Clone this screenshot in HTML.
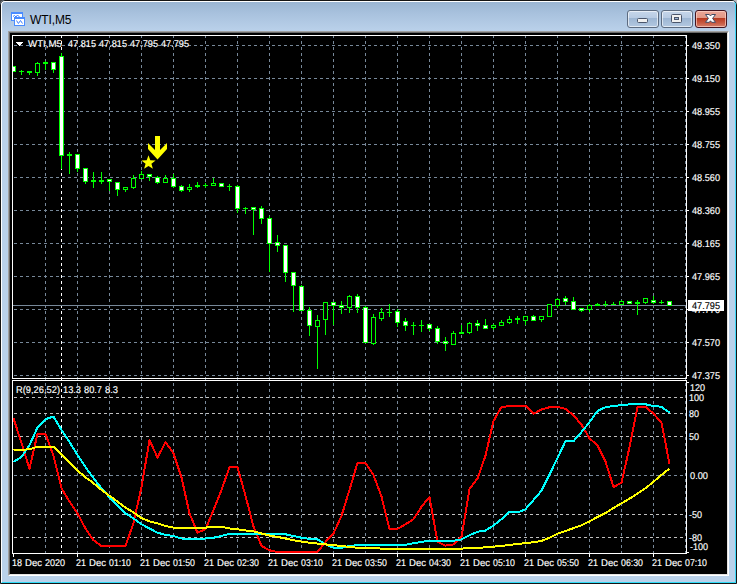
<!DOCTYPE html>
<html><head><meta charset="utf-8"><title>WTI,M5</title>
<style>
html,body{margin:0;padding:0;background:#fff;}
body{width:739px;height:584px;overflow:hidden;position:relative;font-family:"Liberation Sans",sans-serif;}
.win{position:absolute;left:0;top:0;width:737px;height:584px;border-radius:5px 5px 0 0;
 background:linear-gradient(to bottom,#98b3d1 0px,#a9c2de 14px,#bad1ea 31px,#b9d1ea 100%);overflow:hidden;}
.win .b0{position:absolute;left:0;top:0;right:0;bottom:0;border:1px solid #141414;border-radius:5px 5px 0 0;}
.win .b1{position:absolute;left:1px;top:1px;right:1px;bottom:1px;border:1px solid #fff;border-right-color:#3fd8f8;border-bottom-color:#2fdcf8;border-radius:4px 4px 0 0;}

.title{position:absolute;left:30px;top:12px;font-size:12px;line-height:16px;color:#000;white-space:pre;letter-spacing:-0.1px;}
.client{position:absolute;left:8px;top:31px;width:717px;height:541px;background:#000;
 border-style:solid;border-width:2px;border-color:#a0a0a0 #fff #fff #a0a0a0;}
.client:before{content:"";position:absolute;left:-1px;top:-1px;right:-1px;bottom:-1px;border-style:solid;border-width:1px;border-color:#696969 #e3e3e3 #e3e3e3 #696969;}
.btn{position:absolute;top:10px;height:16px;border:1px solid #5c6b80;border-radius:3px;box-shadow:inset 0 0 0 1px rgba(255,255,255,.6);
 background:linear-gradient(to bottom,#c6d6ea 0%,#b8cbe3 42%,#9db6d3 46%,#b3c8e1 100%);}
.btn.min i{position:absolute;left:9px;top:7px;width:9px;height:3px;background:#f0f0f0;border:1px solid #4a556b;border-radius:1.5px;}
.btn.max i{position:absolute;left:9px;top:3px;width:9px;height:7px;background:#f0f0f0;border:1px solid #4a556b;border-radius:1.5px;}
.btn.max b{position:absolute;left:12px;top:6px;width:3px;height:1px;background:#9bb4d4;border:1px solid #4a556b;}
.btn.close{border-color:#431520;background:linear-gradient(to bottom,#eaa698 0%,#e29886 42%,#b83a21 46%,#c85a42 75%,#d4806e 100%);box-shadow:inset 0 0 0 1px rgba(255,215,205,.65);}
svg text{font-family:"Liberation Sans",sans-serif;font-size:9.8px;text-rendering:geometricPrecision;stroke-width:0.15px;}
</style></head><body>
<div style="position:absolute;left:0;top:0;width:5px;height:5px;background:#444"></div><div style="position:absolute;left:731px;top:0;width:6px;height:5px;background:#bbb"></div>
<div class="win"><div class="b0"></div><div class="b1"></div>
<svg class="ico" width="16" height="16" viewBox="10 11 16 16" style="position:absolute;left:10px;top:11px" shape-rendering="crispEdges">
<rect x="11" y="12" width="12" height="9" fill="#4a8cff"/><rect x="12" y="14" width="10" height="6" fill="#fff"/>
<polyline points="13,16.5 14.5,15.5 16,17 17.5,15 19.5,17" fill="none" stroke="#3f7fff" shape-rendering="auto"/>
<rect x="14" y="17" width="11" height="9" fill="#4a8cff"/><rect x="15" y="19" width="9" height="6" fill="#fff"/>
<polyline points="16.5,20.5 18.4,23.5 20.5,20.5 22.5,23.5" fill="none" stroke="#3f7fff" shape-rendering="auto"/>
</svg>
<div class="title">WTI,M5</div>
<div class="btn min" style="left:627px;width:30px"><i></i></div>
<div class="btn max" style="left:661px;width:30px"><i></i><b></b></div>
<div class="btn close" style="left:695px;width:30px"><svg width="13" height="11" viewBox="0 0 13 11" style="position:absolute;left:8px;top:2px"><path d="M1.5 1.5 L5.3 1.5 L6.5 3 L7.7 1.5 L11.5 1.5 L8.6 5.4 L11.5 9.3 L7.7 9.3 L6.5 7.8 L5.3 9.3 L1.5 9.3 L4.4 5.4 Z" fill="#fff" stroke="#414a63" stroke-width="1" stroke-linejoin="round"/></svg></div>
<div class="client"></div>
</div>
<svg width="739" height="584" viewBox="0 0 739 584" style="position:absolute;left:0;top:0">
<g shape-rendering="crispEdges">
<line x1="45.5" y1="36" x2="45.5" y2="553" stroke="#778899" stroke-dasharray="3 3" stroke-dashoffset="1"/>
<line x1="77.5" y1="36" x2="77.5" y2="553" stroke="#778899" stroke-dasharray="3 3" stroke-dashoffset="1"/>
<line x1="109.5" y1="36" x2="109.5" y2="553" stroke="#778899" stroke-dasharray="3 3" stroke-dashoffset="1"/>
<line x1="141.5" y1="36" x2="141.5" y2="553" stroke="#778899" stroke-dasharray="3 3" stroke-dashoffset="1"/>
<line x1="173.5" y1="36" x2="173.5" y2="553" stroke="#778899" stroke-dasharray="3 3" stroke-dashoffset="1"/>
<line x1="205.5" y1="36" x2="205.5" y2="553" stroke="#778899" stroke-dasharray="3 3" stroke-dashoffset="1"/>
<line x1="237.5" y1="36" x2="237.5" y2="553" stroke="#778899" stroke-dasharray="3 3" stroke-dashoffset="1"/>
<line x1="269.5" y1="36" x2="269.5" y2="553" stroke="#778899" stroke-dasharray="3 3" stroke-dashoffset="1"/>
<line x1="301.5" y1="36" x2="301.5" y2="553" stroke="#778899" stroke-dasharray="3 3" stroke-dashoffset="1"/>
<line x1="333.5" y1="36" x2="333.5" y2="553" stroke="#778899" stroke-dasharray="3 3" stroke-dashoffset="1"/>
<line x1="365.5" y1="36" x2="365.5" y2="553" stroke="#778899" stroke-dasharray="3 3" stroke-dashoffset="1"/>
<line x1="397.5" y1="36" x2="397.5" y2="553" stroke="#778899" stroke-dasharray="3 3" stroke-dashoffset="1"/>
<line x1="429.5" y1="36" x2="429.5" y2="553" stroke="#778899" stroke-dasharray="3 3" stroke-dashoffset="1"/>
<line x1="461.5" y1="36" x2="461.5" y2="553" stroke="#778899" stroke-dasharray="3 3" stroke-dashoffset="1"/>
<line x1="493.5" y1="36" x2="493.5" y2="553" stroke="#778899" stroke-dasharray="3 3" stroke-dashoffset="1"/>
<line x1="525.5" y1="36" x2="525.5" y2="553" stroke="#778899" stroke-dasharray="3 3" stroke-dashoffset="1"/>
<line x1="557.5" y1="36" x2="557.5" y2="553" stroke="#778899" stroke-dasharray="3 3" stroke-dashoffset="1"/>
<line x1="589.5" y1="36" x2="589.5" y2="553" stroke="#778899" stroke-dasharray="3 3" stroke-dashoffset="1"/>
<line x1="621.5" y1="36" x2="621.5" y2="553" stroke="#778899" stroke-dasharray="3 3" stroke-dashoffset="1"/>
<line x1="653.5" y1="36" x2="653.5" y2="553" stroke="#778899" stroke-dasharray="3 3" stroke-dashoffset="1"/>
<line x1="685.5" y1="36" x2="685.5" y2="553" stroke="#778899" stroke-dasharray="3 3" stroke-dashoffset="1"/>
<line x1="14" y1="45.5" x2="686" y2="45.5" stroke="#778899" stroke-dasharray="3 3"/>
<rect x="687" y="45" width="2" height="1" fill="#fff"/>
<line x1="14" y1="78.5" x2="686" y2="78.5" stroke="#778899" stroke-dasharray="3 3"/>
<rect x="687" y="78" width="2" height="1" fill="#fff"/>
<line x1="14" y1="111.5" x2="686" y2="111.5" stroke="#778899" stroke-dasharray="3 3"/>
<rect x="687" y="111" width="2" height="1" fill="#fff"/>
<line x1="14" y1="144.5" x2="686" y2="144.5" stroke="#778899" stroke-dasharray="3 3"/>
<rect x="687" y="144" width="2" height="1" fill="#fff"/>
<line x1="14" y1="177.5" x2="686" y2="177.5" stroke="#778899" stroke-dasharray="3 3"/>
<rect x="687" y="177" width="2" height="1" fill="#fff"/>
<line x1="14" y1="210.5" x2="686" y2="210.5" stroke="#778899" stroke-dasharray="3 3"/>
<rect x="687" y="210" width="2" height="1" fill="#fff"/>
<line x1="14" y1="243.5" x2="686" y2="243.5" stroke="#778899" stroke-dasharray="3 3"/>
<rect x="687" y="243" width="2" height="1" fill="#fff"/>
<line x1="14" y1="276.5" x2="686" y2="276.5" stroke="#778899" stroke-dasharray="3 3"/>
<rect x="687" y="276" width="2" height="1" fill="#fff"/>
<line x1="14" y1="309.5" x2="686" y2="309.5" stroke="#778899" stroke-dasharray="3 3"/>
<rect x="687" y="309" width="2" height="1" fill="#fff"/>
<line x1="14" y1="342.5" x2="686" y2="342.5" stroke="#778899" stroke-dasharray="3 3"/>
<rect x="687" y="342" width="2" height="1" fill="#fff"/>
<line x1="14" y1="375.5" x2="686" y2="375.5" stroke="#778899" stroke-dasharray="3 3"/>
<rect x="687" y="375" width="2" height="1" fill="#fff"/>
<line x1="61.5" y1="36" x2="61.5" y2="553" stroke="#fff" stroke-dasharray="3 3" stroke-dashoffset="1"/>
<line x1="14" y1="397.5" x2="686" y2="397.5" stroke="#C0C0C0" stroke-dasharray="3 3"/>
<line x1="14" y1="413.5" x2="686" y2="413.5" stroke="#C0C0C0" stroke-dasharray="3 3"/>
<line x1="14" y1="436.5" x2="686" y2="436.5" stroke="#C0C0C0" stroke-dasharray="3 3"/>
<line x1="14" y1="475.5" x2="686" y2="475.5" stroke="#778899" stroke-dasharray="3 3"/>
<line x1="14" y1="514.5" x2="686" y2="514.5" stroke="#C0C0C0" stroke-dasharray="3 3"/>
<line x1="14" y1="537.5" x2="686" y2="537.5" stroke="#C0C0C0" stroke-dasharray="3 3"/>
<rect x="687" y="382" width="2" height="1" fill="#fff"/>
<rect x="687" y="552" width="2" height="1" fill="#fff"/>
<rect x="12.5" y="35.5" width="674" height="343" fill="none" stroke="#fff"/>
<rect x="12.5" y="380.5" width="674" height="173" fill="none" stroke="#fff"/>
<rect x="13" y="554" width="1" height="3" fill="#fff"/>
<rect x="77" y="554" width="1" height="3" fill="#fff"/>
<rect x="141" y="554" width="1" height="3" fill="#fff"/>
<rect x="205" y="554" width="1" height="3" fill="#fff"/>
<rect x="269" y="554" width="1" height="3" fill="#fff"/>
<rect x="333" y="554" width="1" height="3" fill="#fff"/>
<rect x="397" y="554" width="1" height="3" fill="#fff"/>
<rect x="461" y="554" width="1" height="3" fill="#fff"/>
<rect x="525" y="554" width="1" height="3" fill="#fff"/>
<rect x="589" y="554" width="1" height="3" fill="#fff"/>
<rect x="653" y="554" width="1" height="3" fill="#fff"/>
<rect x="13" y="305" width="673" height="1" fill="#778899"/>
<rect x="13" y="66" width="1" height="6" fill="#00FF00"/>
<rect x="13" y="66" width="3" height="6" fill="#00FF00"/>
<rect x="13" y="67" width="2" height="4" fill="#fff"/>
<rect x="21" y="70" width="1" height="5" fill="#00FF00"/>
<rect x="19" y="71" width="5" height="1" fill="#00FF00"/>
<rect x="29" y="71" width="1" height="4" fill="#00FF00"/>
<rect x="27" y="71" width="5" height="2" fill="#00FF00"/>
<rect x="37" y="62" width="1" height="14" fill="#00FF00"/>
<rect x="35" y="63" width="5" height="10" fill="#00FF00"/>
<rect x="36" y="64" width="3" height="8" fill="#000"/>
<rect x="45" y="61" width="1" height="9" fill="#00FF00"/>
<rect x="43" y="62" width="5" height="2" fill="#00FF00"/>
<rect x="53" y="62" width="1" height="11" fill="#00FF00"/>
<rect x="51" y="62" width="5" height="8" fill="#00FF00"/>
<rect x="52" y="63" width="3" height="6" fill="#fff"/>
<rect x="61" y="53" width="1" height="116" fill="#00FF00"/>
<rect x="59" y="56" width="5" height="100" fill="#00FF00"/>
<rect x="60" y="57" width="3" height="98" fill="#fff"/>
<rect x="69" y="152" width="1" height="22" fill="#00FF00"/>
<rect x="67" y="154" width="5" height="2" fill="#00FF00"/>
<rect x="77" y="154" width="1" height="18" fill="#00FF00"/>
<rect x="75" y="154" width="5" height="15" fill="#00FF00"/>
<rect x="76" y="155" width="3" height="13" fill="#fff"/>
<rect x="85" y="168" width="1" height="16" fill="#00FF00"/>
<rect x="83" y="168" width="5" height="14" fill="#00FF00"/>
<rect x="84" y="169" width="3" height="12" fill="#fff"/>
<rect x="93" y="172" width="1" height="16" fill="#00FF00"/>
<rect x="91" y="180" width="5" height="2" fill="#00FF00"/>
<rect x="101" y="172" width="1" height="12" fill="#00FF00"/>
<rect x="99" y="180" width="5" height="2" fill="#00FF00"/>
<rect x="109" y="179" width="1" height="12" fill="#00FF00"/>
<rect x="107" y="179" width="5" height="3" fill="#00FF00"/>
<rect x="108" y="180" width="3" height="1" fill="#fff"/>
<rect x="117" y="182" width="1" height="14" fill="#00FF00"/>
<rect x="115" y="182" width="5" height="8" fill="#00FF00"/>
<rect x="116" y="183" width="3" height="6" fill="#fff"/>
<rect x="125" y="187" width="1" height="5" fill="#00FF00"/>
<rect x="123" y="187" width="5" height="3" fill="#00FF00"/>
<rect x="124" y="188" width="3" height="1" fill="#000"/>
<rect x="133" y="175" width="1" height="14" fill="#00FF00"/>
<rect x="131" y="178" width="5" height="10" fill="#00FF00"/>
<rect x="132" y="179" width="3" height="8" fill="#000"/>
<rect x="141" y="171" width="1" height="8" fill="#00FF00"/>
<rect x="139" y="174" width="5" height="5" fill="#00FF00"/>
<rect x="140" y="175" width="3" height="3" fill="#000"/>
<rect x="149" y="174" width="1" height="7" fill="#00FF00"/>
<rect x="147" y="174" width="5" height="3" fill="#00FF00"/>
<rect x="148" y="175" width="3" height="1" fill="#fff"/>
<rect x="157" y="176" width="1" height="8" fill="#00FF00"/>
<rect x="155" y="177" width="5" height="6" fill="#00FF00"/>
<rect x="156" y="178" width="3" height="4" fill="#fff"/>
<rect x="165" y="175" width="1" height="8" fill="#00FF00"/>
<rect x="163" y="178" width="5" height="5" fill="#00FF00"/>
<rect x="164" y="179" width="3" height="3" fill="#000"/>
<rect x="173" y="174" width="1" height="14" fill="#00FF00"/>
<rect x="171" y="178" width="5" height="9" fill="#00FF00"/>
<rect x="172" y="179" width="3" height="7" fill="#fff"/>
<rect x="181" y="185" width="1" height="7" fill="#00FF00"/>
<rect x="179" y="186" width="5" height="5" fill="#00FF00"/>
<rect x="180" y="187" width="3" height="3" fill="#fff"/>
<rect x="189" y="184" width="1" height="8" fill="#00FF00"/>
<rect x="187" y="187" width="5" height="3" fill="#00FF00"/>
<rect x="188" y="188" width="3" height="1" fill="#000"/>
<rect x="197" y="182" width="1" height="6" fill="#00FF00"/>
<rect x="195" y="185" width="5" height="2" fill="#00FF00"/>
<rect x="205" y="183" width="1" height="5" fill="#00FF00"/>
<rect x="203" y="185" width="5" height="1" fill="#00FF00"/>
<rect x="213" y="178" width="1" height="8" fill="#00FF00"/>
<rect x="211" y="183" width="5" height="3" fill="#00FF00"/>
<rect x="212" y="184" width="3" height="1" fill="#000"/>
<rect x="221" y="183" width="1" height="4" fill="#00FF00"/>
<rect x="219" y="183" width="5" height="4" fill="#00FF00"/>
<rect x="220" y="184" width="3" height="2" fill="#fff"/>
<rect x="229" y="184" width="1" height="7" fill="#00FF00"/>
<rect x="227" y="186" width="5" height="1" fill="#00FF00"/>
<rect x="237" y="185" width="1" height="28" fill="#00FF00"/>
<rect x="235" y="186" width="5" height="23" fill="#00FF00"/>
<rect x="236" y="187" width="3" height="21" fill="#fff"/>
<rect x="245" y="207" width="1" height="7" fill="#00FF00"/>
<rect x="243" y="208" width="5" height="1" fill="#00FF00"/>
<rect x="253" y="207" width="1" height="28" fill="#00FF00"/>
<rect x="251" y="207" width="5" height="3" fill="#00FF00"/>
<rect x="252" y="208" width="3" height="1" fill="#fff"/>
<rect x="261" y="206" width="1" height="18" fill="#00FF00"/>
<rect x="259" y="208" width="5" height="11" fill="#00FF00"/>
<rect x="260" y="209" width="3" height="9" fill="#fff"/>
<rect x="269" y="216" width="1" height="56" fill="#00FF00"/>
<rect x="267" y="218" width="5" height="26" fill="#00FF00"/>
<rect x="268" y="219" width="3" height="24" fill="#fff"/>
<rect x="277" y="235" width="1" height="17" fill="#00FF00"/>
<rect x="275" y="242" width="5" height="4" fill="#00FF00"/>
<rect x="276" y="243" width="3" height="2" fill="#fff"/>
<rect x="285" y="245" width="1" height="37" fill="#00FF00"/>
<rect x="283" y="245" width="5" height="28" fill="#00FF00"/>
<rect x="284" y="246" width="3" height="26" fill="#fff"/>
<rect x="293" y="272" width="1" height="40" fill="#00FF00"/>
<rect x="291" y="272" width="5" height="14" fill="#00FF00"/>
<rect x="292" y="273" width="3" height="12" fill="#fff"/>
<rect x="301" y="285" width="1" height="26" fill="#00FF00"/>
<rect x="299" y="286" width="5" height="25" fill="#00FF00"/>
<rect x="300" y="287" width="3" height="23" fill="#fff"/>
<rect x="309" y="307" width="1" height="29" fill="#00FF00"/>
<rect x="307" y="310" width="5" height="16" fill="#00FF00"/>
<rect x="308" y="311" width="3" height="14" fill="#fff"/>
<rect x="317" y="315" width="1" height="54" fill="#00FF00"/>
<rect x="315" y="320" width="5" height="7" fill="#00FF00"/>
<rect x="316" y="321" width="3" height="5" fill="#000"/>
<rect x="325" y="302" width="1" height="33" fill="#00FF00"/>
<rect x="323" y="302" width="5" height="18" fill="#00FF00"/>
<rect x="324" y="303" width="3" height="16" fill="#000"/>
<rect x="333" y="302" width="1" height="23" fill="#00FF00"/>
<rect x="331" y="302" width="5" height="4" fill="#00FF00"/>
<rect x="332" y="303" width="3" height="2" fill="#fff"/>
<rect x="341" y="301" width="1" height="13" fill="#00FF00"/>
<rect x="339" y="305" width="5" height="3" fill="#00FF00"/>
<rect x="340" y="306" width="3" height="1" fill="#fff"/>
<rect x="349" y="295" width="1" height="18" fill="#00FF00"/>
<rect x="347" y="296" width="5" height="12" fill="#00FF00"/>
<rect x="348" y="297" width="3" height="10" fill="#000"/>
<rect x="357" y="294" width="1" height="19" fill="#00FF00"/>
<rect x="355" y="296" width="5" height="12" fill="#00FF00"/>
<rect x="356" y="297" width="3" height="10" fill="#fff"/>
<rect x="365" y="306" width="1" height="37" fill="#00FF00"/>
<rect x="363" y="307" width="5" height="36" fill="#00FF00"/>
<rect x="364" y="308" width="3" height="34" fill="#fff"/>
<rect x="373" y="314" width="1" height="31" fill="#00FF00"/>
<rect x="371" y="317" width="5" height="27" fill="#00FF00"/>
<rect x="372" y="318" width="3" height="25" fill="#000"/>
<rect x="381" y="308" width="1" height="13" fill="#00FF00"/>
<rect x="379" y="312" width="5" height="7" fill="#00FF00"/>
<rect x="380" y="313" width="3" height="5" fill="#000"/>
<rect x="389" y="304" width="1" height="13" fill="#00FF00"/>
<rect x="387" y="312" width="5" height="1" fill="#00FF00"/>
<rect x="397" y="309" width="1" height="18" fill="#00FF00"/>
<rect x="395" y="311" width="5" height="12" fill="#00FF00"/>
<rect x="396" y="312" width="3" height="10" fill="#fff"/>
<rect x="405" y="318" width="1" height="13" fill="#00FF00"/>
<rect x="403" y="321" width="5" height="5" fill="#00FF00"/>
<rect x="404" y="322" width="3" height="3" fill="#fff"/>
<rect x="413" y="322" width="1" height="13" fill="#00FF00"/>
<rect x="411" y="325" width="5" height="1" fill="#00FF00"/>
<rect x="421" y="320" width="1" height="12" fill="#00FF00"/>
<rect x="419" y="325" width="5" height="1" fill="#00FF00"/>
<rect x="429" y="324" width="1" height="7" fill="#00FF00"/>
<rect x="427" y="324" width="5" height="5" fill="#00FF00"/>
<rect x="428" y="325" width="3" height="3" fill="#fff"/>
<rect x="437" y="326" width="1" height="18" fill="#00FF00"/>
<rect x="435" y="328" width="5" height="14" fill="#00FF00"/>
<rect x="436" y="329" width="3" height="12" fill="#fff"/>
<rect x="445" y="337" width="1" height="14" fill="#00FF00"/>
<rect x="443" y="341" width="5" height="3" fill="#00FF00"/>
<rect x="444" y="342" width="3" height="1" fill="#fff"/>
<rect x="453" y="331" width="1" height="14" fill="#00FF00"/>
<rect x="451" y="333" width="5" height="12" fill="#00FF00"/>
<rect x="452" y="334" width="3" height="10" fill="#000"/>
<rect x="461" y="325" width="1" height="9" fill="#00FF00"/>
<rect x="459" y="332" width="5" height="2" fill="#00FF00"/>
<rect x="469" y="322" width="1" height="12" fill="#00FF00"/>
<rect x="467" y="323" width="5" height="10" fill="#00FF00"/>
<rect x="468" y="324" width="3" height="8" fill="#000"/>
<rect x="477" y="320" width="1" height="11" fill="#00FF00"/>
<rect x="475" y="323" width="5" height="3" fill="#00FF00"/>
<rect x="476" y="324" width="3" height="1" fill="#fff"/>
<rect x="485" y="319" width="1" height="10" fill="#00FF00"/>
<rect x="483" y="325" width="5" height="4" fill="#00FF00"/>
<rect x="484" y="326" width="3" height="2" fill="#fff"/>
<rect x="493" y="324" width="1" height="6" fill="#00FF00"/>
<rect x="491" y="325" width="5" height="3" fill="#00FF00"/>
<rect x="492" y="326" width="3" height="1" fill="#000"/>
<rect x="501" y="320" width="1" height="6" fill="#00FF00"/>
<rect x="499" y="322" width="5" height="4" fill="#00FF00"/>
<rect x="500" y="323" width="3" height="2" fill="#000"/>
<rect x="509" y="316" width="1" height="8" fill="#00FF00"/>
<rect x="507" y="319" width="5" height="4" fill="#00FF00"/>
<rect x="508" y="320" width="3" height="2" fill="#000"/>
<rect x="517" y="316" width="1" height="8" fill="#00FF00"/>
<rect x="515" y="318" width="5" height="2" fill="#00FF00"/>
<rect x="525" y="316" width="1" height="9" fill="#00FF00"/>
<rect x="523" y="316" width="5" height="5" fill="#00FF00"/>
<rect x="524" y="317" width="3" height="3" fill="#000"/>
<rect x="533" y="315" width="1" height="6" fill="#00FF00"/>
<rect x="531" y="316" width="5" height="5" fill="#00FF00"/>
<rect x="532" y="317" width="3" height="3" fill="#fff"/>
<rect x="541" y="316" width="1" height="6" fill="#00FF00"/>
<rect x="539" y="316" width="5" height="4" fill="#00FF00"/>
<rect x="540" y="317" width="3" height="2" fill="#000"/>
<rect x="549" y="304" width="1" height="13" fill="#00FF00"/>
<rect x="547" y="304" width="5" height="13" fill="#00FF00"/>
<rect x="548" y="305" width="3" height="11" fill="#000"/>
<rect x="557" y="298" width="1" height="10" fill="#00FF00"/>
<rect x="555" y="299" width="5" height="7" fill="#00FF00"/>
<rect x="556" y="300" width="3" height="5" fill="#000"/>
<rect x="565" y="296" width="1" height="9" fill="#00FF00"/>
<rect x="563" y="298" width="5" height="4" fill="#00FF00"/>
<rect x="564" y="299" width="3" height="2" fill="#fff"/>
<rect x="573" y="297" width="1" height="13" fill="#00FF00"/>
<rect x="571" y="301" width="5" height="9" fill="#00FF00"/>
<rect x="572" y="302" width="3" height="7" fill="#fff"/>
<rect x="581" y="308" width="1" height="4" fill="#00FF00"/>
<rect x="579" y="308" width="5" height="3" fill="#00FF00"/>
<rect x="580" y="309" width="3" height="1" fill="#fff"/>
<rect x="589" y="304" width="1" height="8" fill="#00FF00"/>
<rect x="587" y="305" width="5" height="5" fill="#00FF00"/>
<rect x="588" y="306" width="3" height="3" fill="#000"/>
<rect x="597" y="303" width="1" height="3" fill="#00FF00"/>
<rect x="595" y="304" width="5" height="2" fill="#00FF00"/>
<rect x="605" y="301" width="1" height="6" fill="#00FF00"/>
<rect x="603" y="304" width="5" height="1" fill="#00FF00"/>
<rect x="613" y="302" width="1" height="3" fill="#00FF00"/>
<rect x="611" y="304" width="5" height="1" fill="#00FF00"/>
<rect x="621" y="300" width="1" height="5" fill="#00FF00"/>
<rect x="619" y="301" width="5" height="4" fill="#00FF00"/>
<rect x="620" y="302" width="3" height="2" fill="#000"/>
<rect x="629" y="301" width="1" height="3" fill="#00FF00"/>
<rect x="627" y="301" width="5" height="3" fill="#00FF00"/>
<rect x="628" y="302" width="3" height="1" fill="#fff"/>
<rect x="637" y="300" width="1" height="15" fill="#00FF00"/>
<rect x="635" y="302" width="5" height="2" fill="#00FF00"/>
<rect x="645" y="298" width="1" height="6" fill="#00FF00"/>
<rect x="643" y="298" width="5" height="5" fill="#00FF00"/>
<rect x="644" y="299" width="3" height="3" fill="#000"/>
<rect x="653" y="296" width="1" height="8" fill="#00FF00"/>
<rect x="651" y="300" width="5" height="3" fill="#00FF00"/>
<rect x="652" y="301" width="3" height="1" fill="#fff"/>
<rect x="661" y="300" width="1" height="4" fill="#00FF00"/>
<rect x="659" y="302" width="5" height="1" fill="#00FF00"/>
<rect x="669" y="301" width="1" height="5" fill="#00FF00"/>
<rect x="667" y="301" width="5" height="5" fill="#00FF00"/>
<rect x="668" y="302" width="3" height="3" fill="#fff"/>
</g>
<polyline points="13.5,418.3 21.5,443.0 29.5,468.8 37.5,433.7 45.5,433.7 53.5,456.0 61.5,488.2 69.5,501.6 77.5,513.4 85.5,528.5 93.5,540.2 101.5,546.0 109.5,546.0 117.5,546.0 125.5,546.0 133.5,523.0 141.5,487.0 149.5,440.0 157.5,457.6 165.5,442.0 173.5,453.4 181.5,477.5 189.5,513.4 197.5,532.7 205.5,529.3 213.5,510.0 221.5,489.9 229.5,467.2 237.5,467.2 245.5,495.8 253.5,526.5 261.5,546.0 269.5,550.3 277.5,552.0 285.5,552.0 293.5,552.0 301.5,552.0 309.5,552.0 317.5,552.0 325.5,541.9 333.5,533.5 341.5,515.9 349.5,489.9 357.5,463.0 365.5,463.0 373.5,475.2 381.5,496.6 389.5,528.8 397.5,528.8 405.5,524.3 413.5,519.2 421.5,506.7 429.5,496.9 437.5,541.9 445.5,545.6 453.5,544.4 461.5,536.9 469.5,489.0 477.5,478.5 485.5,455.5 493.5,421.1 501.5,406.8 509.5,406.3 517.5,405.7 525.5,405.7 533.5,413.9 541.5,409.4 549.5,407.2 557.5,406.8 565.5,408.9 573.5,415.2 581.5,424.7 589.5,438.3 597.5,445.4 605.5,461.5 613.5,487.0 621.5,482.8 629.5,447.1 637.5,406.8 645.5,406.8 653.5,413.6 661.5,422.8 669.5,463.9" fill="none" stroke="#FF0000" stroke-width="2" stroke-linejoin="round" stroke-linecap="butt" shape-rendering="crispEdges"/>
<polyline points="13.5,461.9 21.5,456.9 29.5,445.1 37.5,427.5 45.5,419.1 53.5,416.6 61.5,430.0 69.5,442.0 77.5,455.0 85.5,467.2 93.5,478.1 101.5,488.2 109.5,497.4 117.5,505.8 125.5,513.4 133.5,518.4 141.5,524.3 149.5,528.5 157.5,532.7 165.5,534.8 173.5,536.0 181.5,538.5 189.5,538.9 197.5,538.9 205.5,538.5 213.5,537.7 221.5,536.0 229.5,533.8 237.5,533.8 245.5,533.8 253.5,533.6 261.5,533.8 269.5,534.3 277.5,534.3 285.5,534.3 293.5,536.0 301.5,537.7 309.5,538.9 317.5,539.4 325.5,544.4 333.5,547.8 341.5,547.8 349.5,546.0 357.5,545.2 365.5,544.9 373.5,544.9 381.5,544.9 389.5,544.9 397.5,544.9 405.5,544.9 413.5,543.2 421.5,541.9 429.5,540.7 437.5,540.7 445.5,540.7 453.5,540.7 461.5,539.4 469.5,535.2 477.5,531.8 485.5,530.5 493.5,525.5 501.5,519.2 509.5,511.7 517.5,512.5 525.5,509.2 533.5,500.0 541.5,490.7 549.5,474.5 557.5,458.0 565.5,441.2 573.5,441.2 581.5,432.0 589.5,422.2 597.5,411.0 605.5,407.2 613.5,406.0 621.5,405.2 629.5,404.3 637.5,404.0 645.5,404.3 653.5,406.0 661.5,406.8 669.5,412.7" fill="none" stroke="#00FFFF" stroke-width="2" stroke-linejoin="round" stroke-linecap="butt" shape-rendering="crispEdges"/>
<polyline points="13.5,450.1 21.5,449.8 29.5,449.3 37.5,446.8 45.5,446.8 53.5,446.8 61.5,454.3 69.5,462.5 77.5,470.6 85.5,477.3 93.5,483.2 101.5,489.9 109.5,495.8 117.5,501.6 125.5,507.5 133.5,512.5 141.5,518.1 149.5,521.4 157.5,523.4 165.5,526.0 173.5,527.6 181.5,527.6 189.5,527.6 197.5,527.6 205.5,527.6 213.5,526.8 221.5,526.8 229.5,528.5 237.5,529.3 245.5,530.5 253.5,531.3 261.5,533.5 269.5,535.5 277.5,536.9 285.5,538.5 293.5,540.2 301.5,541.6 309.5,542.7 317.5,543.6 325.5,544.4 333.5,545.2 341.5,546.0 349.5,546.9 357.5,547.8 365.5,548.1 373.5,548.0 381.5,548.6 389.5,548.6 397.5,548.6 405.5,548.6 413.5,548.6 421.5,548.6 429.5,548.6 437.5,548.6 445.5,548.6 453.5,548.6 461.5,548.6 469.5,548.1 477.5,547.8 485.5,547.4 493.5,546.6 501.5,546.1 509.5,544.9 517.5,543.9 525.5,543.2 533.5,542.2 541.5,541.0 549.5,537.7 557.5,533.8 565.5,531.0 573.5,528.1 581.5,525.3 589.5,521.4 597.5,517.0 605.5,513.0 613.5,508.0 621.5,503.3 629.5,498.6 637.5,493.6 645.5,488.2 653.5,481.8 661.5,474.8 669.5,468.7" fill="none" stroke="#FFFF00" stroke-width="2" stroke-linejoin="round" stroke-linecap="butt" shape-rendering="crispEdges"/>
<polygon points="155,136 160,136 160,150 167,143 167,149 157.5,159.5 148,149 148,143 155,150" fill="#FFFF00"/>
<polygon points="148.50,155.30 150.31,160.31 155.63,160.48 151.42,163.75 152.91,168.87 148.50,165.88 144.09,168.87 145.58,163.75 141.37,160.48 146.69,160.31" fill="#FFFF00"/>
<g shape-rendering="crispEdges"><rect x="16" y="42" width="7" height="1" fill="#fff"/><rect x="17" y="43" width="5" height="1" fill="#fff"/><rect x="18" y="44" width="3" height="1" fill="#fff"/><rect x="19" y="45" width="1" height="1" fill="#fff"/></g>
<text x="692" y="49" fill="#fff" stroke="#fff" textLength="28" lengthAdjust="spacingAndGlyphs">49.350</text>
<text x="692" y="82" fill="#fff" stroke="#fff" textLength="28" lengthAdjust="spacingAndGlyphs">49.150</text>
<text x="692" y="115" fill="#fff" stroke="#fff" textLength="28" lengthAdjust="spacingAndGlyphs">48.955</text>
<text x="692" y="148" fill="#fff" stroke="#fff" textLength="28" lengthAdjust="spacingAndGlyphs">48.755</text>
<text x="692" y="181" fill="#fff" stroke="#fff" textLength="28" lengthAdjust="spacingAndGlyphs">48.560</text>
<text x="692" y="214" fill="#fff" stroke="#fff" textLength="28" lengthAdjust="spacingAndGlyphs">48.360</text>
<text x="692" y="247" fill="#fff" stroke="#fff" textLength="28" lengthAdjust="spacingAndGlyphs">48.165</text>
<text x="692" y="280" fill="#fff" stroke="#fff" textLength="28" lengthAdjust="spacingAndGlyphs">47.965</text>
<text x="692" y="313" fill="#fff" stroke="#fff" textLength="28" lengthAdjust="spacingAndGlyphs">47.770</text>
<text x="692" y="346" fill="#fff" stroke="#fff" textLength="28" lengthAdjust="spacingAndGlyphs">47.570</text>
<text x="692" y="379" fill="#fff" stroke="#fff" textLength="28" lengthAdjust="spacingAndGlyphs">47.375</text>
<text x="690" y="391" fill="#fff" stroke="#fff" textLength="15" lengthAdjust="spacingAndGlyphs">120</text>
<text x="689" y="401" fill="#fff" stroke="#fff" textLength="15" lengthAdjust="spacingAndGlyphs">100</text>
<text x="689" y="417" fill="#fff" stroke="#fff" textLength="10" lengthAdjust="spacingAndGlyphs">80</text>
<text x="689" y="440" fill="#fff" stroke="#fff" textLength="10" lengthAdjust="spacingAndGlyphs">50</text>
<text x="690" y="479" fill="#fff" stroke="#fff" textLength="18" lengthAdjust="spacingAndGlyphs">0.00</text>
<text x="689" y="518" fill="#fff" stroke="#fff" textLength="13" lengthAdjust="spacingAndGlyphs">-50</text>
<text x="689" y="541" fill="#fff" stroke="#fff" textLength="13" lengthAdjust="spacingAndGlyphs">-80</text>
<text x="690" y="550" fill="#fff" stroke="#fff" textLength="18" lengthAdjust="spacingAndGlyphs">-100</text>
<text x="12" y="566" fill="#fff" stroke="#fff" textLength="10" lengthAdjust="spacingAndGlyphs">18</text>
<text x="25" y="566" fill="#fff" stroke="#fff" textLength="17" lengthAdjust="spacingAndGlyphs">Dec</text>
<text x="45" y="566" fill="#fff" stroke="#fff" textLength="20" lengthAdjust="spacingAndGlyphs">2020</text>
<text x="76" y="566" fill="#fff" stroke="#fff" textLength="10" lengthAdjust="spacingAndGlyphs">21</text>
<text x="89" y="566" fill="#fff" stroke="#fff" textLength="17" lengthAdjust="spacingAndGlyphs">Dec</text>
<text x="109" y="566" fill="#fff" stroke="#fff" textLength="22" lengthAdjust="spacingAndGlyphs">01:10</text>
<text x="140" y="566" fill="#fff" stroke="#fff" textLength="10" lengthAdjust="spacingAndGlyphs">21</text>
<text x="153" y="566" fill="#fff" stroke="#fff" textLength="17" lengthAdjust="spacingAndGlyphs">Dec</text>
<text x="173" y="566" fill="#fff" stroke="#fff" textLength="22" lengthAdjust="spacingAndGlyphs">01:50</text>
<text x="204" y="566" fill="#fff" stroke="#fff" textLength="10" lengthAdjust="spacingAndGlyphs">21</text>
<text x="217" y="566" fill="#fff" stroke="#fff" textLength="17" lengthAdjust="spacingAndGlyphs">Dec</text>
<text x="237" y="566" fill="#fff" stroke="#fff" textLength="22" lengthAdjust="spacingAndGlyphs">02:30</text>
<text x="268" y="566" fill="#fff" stroke="#fff" textLength="10" lengthAdjust="spacingAndGlyphs">21</text>
<text x="281" y="566" fill="#fff" stroke="#fff" textLength="17" lengthAdjust="spacingAndGlyphs">Dec</text>
<text x="301" y="566" fill="#fff" stroke="#fff" textLength="22" lengthAdjust="spacingAndGlyphs">03:10</text>
<text x="332" y="566" fill="#fff" stroke="#fff" textLength="10" lengthAdjust="spacingAndGlyphs">21</text>
<text x="345" y="566" fill="#fff" stroke="#fff" textLength="17" lengthAdjust="spacingAndGlyphs">Dec</text>
<text x="365" y="566" fill="#fff" stroke="#fff" textLength="22" lengthAdjust="spacingAndGlyphs">03:50</text>
<text x="396" y="566" fill="#fff" stroke="#fff" textLength="10" lengthAdjust="spacingAndGlyphs">21</text>
<text x="409" y="566" fill="#fff" stroke="#fff" textLength="17" lengthAdjust="spacingAndGlyphs">Dec</text>
<text x="429" y="566" fill="#fff" stroke="#fff" textLength="22" lengthAdjust="spacingAndGlyphs">04:30</text>
<text x="460" y="566" fill="#fff" stroke="#fff" textLength="10" lengthAdjust="spacingAndGlyphs">21</text>
<text x="473" y="566" fill="#fff" stroke="#fff" textLength="17" lengthAdjust="spacingAndGlyphs">Dec</text>
<text x="493" y="566" fill="#fff" stroke="#fff" textLength="22" lengthAdjust="spacingAndGlyphs">05:10</text>
<text x="524" y="566" fill="#fff" stroke="#fff" textLength="10" lengthAdjust="spacingAndGlyphs">21</text>
<text x="537" y="566" fill="#fff" stroke="#fff" textLength="17" lengthAdjust="spacingAndGlyphs">Dec</text>
<text x="557" y="566" fill="#fff" stroke="#fff" textLength="22" lengthAdjust="spacingAndGlyphs">05:50</text>
<text x="588" y="566" fill="#fff" stroke="#fff" textLength="10" lengthAdjust="spacingAndGlyphs">21</text>
<text x="601" y="566" fill="#fff" stroke="#fff" textLength="17" lengthAdjust="spacingAndGlyphs">Dec</text>
<text x="621" y="566" fill="#fff" stroke="#fff" textLength="22" lengthAdjust="spacingAndGlyphs">06:30</text>
<text x="652" y="566" fill="#fff" stroke="#fff" textLength="10" lengthAdjust="spacingAndGlyphs">21</text>
<text x="665" y="566" fill="#fff" stroke="#fff" textLength="17" lengthAdjust="spacingAndGlyphs">Dec</text>
<text x="685" y="566" fill="#fff" stroke="#fff" textLength="22" lengthAdjust="spacingAndGlyphs">07:10</text>
<text x="28" y="47" fill="#fff" stroke="#fff" textLength="34" lengthAdjust="spacingAndGlyphs">WTI,M5</text>
<text x="68" y="47" fill="#fff" stroke="#fff" textLength="28" lengthAdjust="spacingAndGlyphs">47.815</text>
<text x="99" y="47" fill="#fff" stroke="#fff" textLength="28" lengthAdjust="spacingAndGlyphs">47.815</text>
<text x="130" y="47" fill="#fff" stroke="#fff" textLength="28" lengthAdjust="spacingAndGlyphs">47.795</text>
<text x="161" y="47" fill="#fff" stroke="#fff" textLength="28" lengthAdjust="spacingAndGlyphs">47.795</text>
<text x="16" y="393" fill="#fff" stroke="#fff" textLength="44" lengthAdjust="spacingAndGlyphs">R(9,26,52)</text>
<text x="63" y="393" fill="#fff" stroke="#fff" textLength="18" lengthAdjust="spacingAndGlyphs">13.3</text>
<text x="84" y="393" fill="#fff" stroke="#fff" textLength="18" lengthAdjust="spacingAndGlyphs">80.7</text>
<text x="105" y="393" fill="#fff" stroke="#fff" textLength="13" lengthAdjust="spacingAndGlyphs">8.3</text>
<rect x="688" y="300" width="36" height="11" fill="#fff" shape-rendering="crispEdges"/>
<text x="692" y="309" fill="#000" stroke="#000" textLength="28" lengthAdjust="spacingAndGlyphs">47.795</text>
</svg>
</body></html>
